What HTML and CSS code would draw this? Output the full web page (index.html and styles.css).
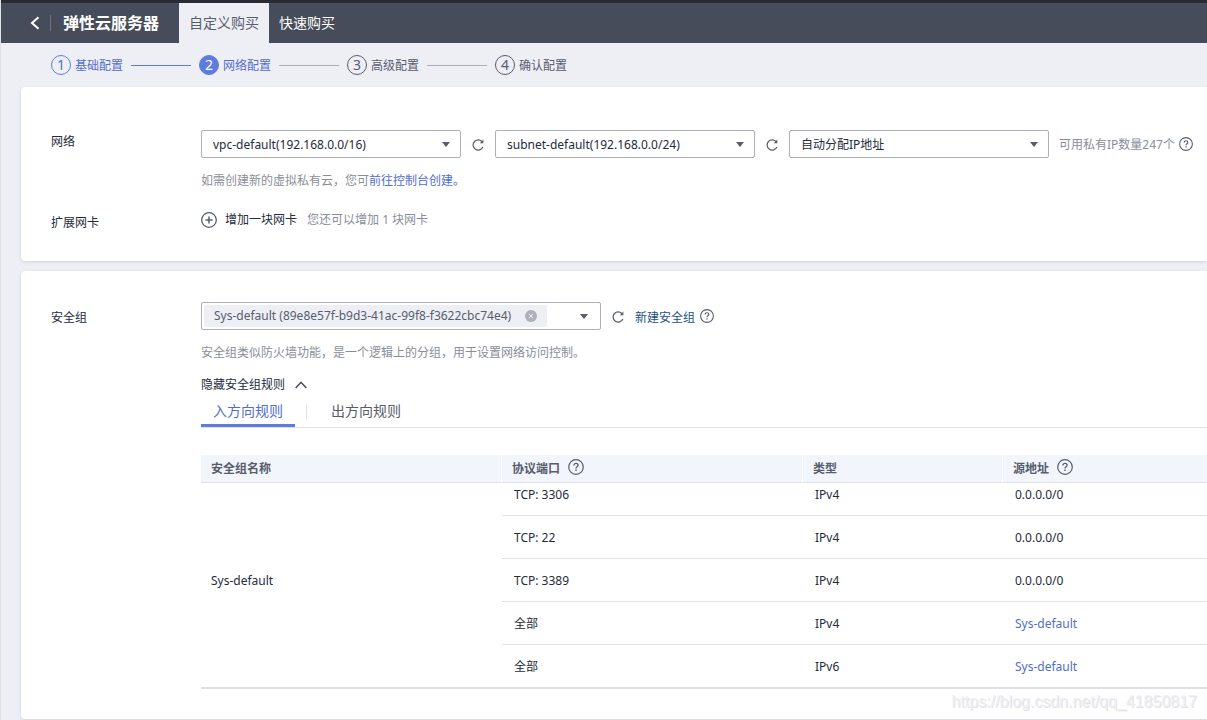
FILE: index.html
```html
<!DOCTYPE html>
<html lang="zh-CN">
<head>
<meta charset="utf-8">
<title>弹性云服务器 - 自定义购买</title>
<link rel="stylesheet" href="styles.css">
</head>
<body>
<svg class="sprite" aria-hidden="true">
  <symbol id="refresh" viewBox="0 0 12 12"><path d="M10.3 2.9A5.1 5.1 0 1 0 10.9 8" fill="none" stroke="currentColor" stroke-width="1.2"/><path d="M11.4.6v3.6H7.8z" fill="currentColor"/></symbol>
  <symbol id="help" viewBox="0 0 16 16"><circle cx="8" cy="8" r="7.3" fill="none" stroke="currentColor" stroke-width="1.2"/><path d="M5.9 6.4c0-1.3.9-2.1 2.1-2.1s2.1.8 2.1 1.9c0 1.5-2.1 1.6-2.1 3.2" fill="none" stroke="currentColor" stroke-width="1.3"/><path d="M7.3 10.6h1.4V12H7.3z" fill="currentColor"/></symbol>
</svg>
<header class="topbar">
  <button class="back" aria-label="返回"><svg width="10" height="14" viewBox="0 0 10 14"><path d="M8.5 1.2 2 7l6.500 5.800" fill="none" stroke="currentColor" stroke-width="2"/></svg></button>
  <h1 class="title">弹性云服务器</h1>
  <nav class="modes">
    <a class="mode mode-active" href="#custom">自定义购买</a>
    <a class="mode" href="#quick">快速购买</a>
  </nav>
</header>
<main class="page">
  <ol class="steps">
    <li class="step done"><span class="num">1</span><span class="step-name">基础配置</span></li>
    <li class="step current"><span class="num">2</span><span class="step-name">网络配置</span></li>
    <li class="step"><span class="num">3</span><span class="step-name">高级配置</span></li>
    <li class="step"><span class="num">4</span><span class="step-name">确认配置</span></li>
  </ol>

  <section class="card network">
    <div class="field">
      <label class="label" for="vpc">网络</label>
      <div class="content">
        <div class="controls">
          <select id="vpc" class="select"><option>vpc-default(192.168.0.0/16)</option></select>
          <button class="icon-btn" aria-label="刷新虚拟私有云"><svg class="i12"><use href="#refresh"/></svg></button>
          <select class="select" aria-label="子网"><option>subnet-default(192.168.0.0/24)</option></select>
          <button class="icon-btn" aria-label="刷新子网"><svg class="i12"><use href="#refresh"/></svg></button>
          <select class="select" aria-label="IP地址分配"><option>自动分配IP地址</option></select>
          <span class="available">可用私有IP数量247个</span>
          <svg class="i14"><use href="#help"/></svg>
        </div>
        <p class="hint">如需创建新的虚拟私有云，您可<a class="link" href="#console">前往控制台创建。</a></p>
      </div>
    </div>
    <div class="field nic">
      <span class="label">扩展网卡</span>
      <div class="content nic-line">
        <button class="add"><svg width="16" height="16" viewBox="0 0 16 16"><circle cx="8" cy="8" r="7.300" fill="none" stroke="#575d6c" stroke-width="1.300"/><path d="M8 4.500v7M4.500 8h7" stroke="#575d6c" stroke-width="1.500"/></svg>增加一块网卡</button>
        <span class="muted">您还可以增加 1 块网卡</span>
      </div>
    </div>
  </section>

  <section class="card security">
    <div class="field">
      <span class="label">安全组</span>
      <div class="content">
        <div class="controls">
          <div class="combo">
            <span class="chip">Sys-default (89e8e57f-b9d3-41ac-99f8-f3622cbc74e4)
              <button class="remove" aria-label="移除"><svg width="12" height="12" viewBox="0 0 12 12"><circle cx="6" cy="6" r="6" fill="#adb0b8"/><path d="m3.800 3.800 4.400 4.400m0-4.400L3.800 8.200" stroke="#eeeff5" stroke-width="1"/></svg></button>
            </span>
            <button class="open" aria-label="展开"><svg width="8" height="5" viewBox="0 0 8 5"><path d="M0 0h8L4 5z" fill="#575d6c"/></svg></button>
          </div>
          <button class="icon-btn" aria-label="刷新安全组"><svg class="i12"><use href="#refresh"/></svg></button>
          <a class="new-group" href="#new">新建安全组</a>
          <svg class="i14"><use href="#help"/></svg>
        </div>
        <p class="hint">安全组类似防火墙功能，是一个逻辑上的分组，用于设置网络访问控制。</p>
        <button class="toggle">隐藏安全组规则<svg width="12" height="8" viewBox="0 0 12 8"><path d="M.7 7 6 1.300 11.300 7" fill="none" stroke="#464c59" stroke-width="1.500"/></svg></button>
        <div class="tabs" role="tablist">
          <button class="tab tab-active" role="tab" aria-selected="true">入方向规则</button>
          <button class="tab" role="tab" aria-selected="false">出方向规则</button>
        </div>
        <table class="rules">
          <colgroup><col class="c-name"><col class="c-port"><col class="c-type"><col></colgroup>
          <thead>
            <tr>
              <th>安全组名称</th>
              <th><span class="th">协议端口<svg class="i16"><use href="#help"/></svg></span></th>
              <th>类型</th>
              <th><span class="th">源地址<svg class="i16"><use href="#help"/></svg></span></th>
            </tr>
          </thead>
          <tbody>
            <tr class="partial"><td class="group" rowspan="5">Sys-default</td><td>TCP: 3306</td><td>IPv4</td><td>0.0.0.0/0</td></tr>
            <tr><td>TCP: 22</td><td>IPv4</td><td>0.0.0.0/0</td></tr>
            <tr><td>TCP: 3389</td><td>IPv4</td><td>0.0.0.0/0</td></tr>
            <tr><td>全部</td><td>IPv4</td><td><a class="link" href="#sg">Sys-default</a></td></tr>
            <tr><td>全部</td><td>IPv6</td><td><a class="link" href="#sg">Sys-default</a></td></tr>
          </tbody>
        </table>
      </div>
    </div>
  </section>
</main>
<div class="watermark">https://blog.csdn.net/qq_41850817</div>
</body>
</html>
```
FILE: styles.css
```css
* { box-sizing: border-box; }
body {
  margin: 0;
  min-height: 100vh;
  position: relative;
  border-left: 1px solid #dfe1e6;
  background: #eeeff5;
  color: #252b3a;
  font: 12px/18px "Noto Sans", "Noto Sans CJK SC", sans-serif;
}
button { font: inherit; color: inherit; background: none; border: 0; padding: 0; cursor: pointer; }
a { text-decoration: none; color: inherit; }
svg { display: block; flex: none; }
.sprite { position: absolute; width: 0; height: 0; }
.i12 { width: 12px; height: 12px; }
.i14 { width: 14px; height: 14px; color: #575d6c; }
.i16 { width: 16px; height: 16px; color: #575d6c; }
.link { color: #526ecc; }

.topbar {
  display: flex;
  align-items: center;
  height: 43px;
  border-top: 3px solid #282b33;
  background: #464c59;
  color: #fff;
}
.back { padding: 1px 10px 1px 29px; border-right: 1px solid #6c7280; }
.title { margin: 0; padding: 0 20px 0 12px; font-size: 16px; line-height: 24px; font-weight: 700; }
.modes { display: flex; align-self: stretch; font-size: 14px; line-height: 40px; }
.mode { padding: 0 10px; }
.mode-active { background: #eeeff5; color: #575d6c; }

.page { padding-left: 20px; }
.steps { display: flex; list-style: none; margin: 0; padding: 12px 30px; color: #575d6c; }
.step { display: flex; align-items: center; gap: 4px; }
.step:not(:last-child)::after { content: ""; width: 60px; height: 1px; margin: 0 8px 0 4px; background: #adb0b8; }
.step-name { padding-top: 2px; }
.num {
  display: flex;
  align-items: center;
  justify-content: center;
  width: 20px;
  height: 20px;
  border: 1px solid #575d6c;
  border-radius: 50%;
  font-size: 14px;
}
.done, .current { color: #526ecc; }
.step.done:not(:last-child)::after { background: #5e7ce0; }
.done .num { border-color: #5e7ce0; }
.current .num { border-color: #5e7ce0; background: #5e7ce0; color: #fff; }

.card {
  padding-left: 30px;
  border-radius: 4px 0 0 4px;
  background: #fff;
  box-shadow: 0 1px 3px rgba(70, 76, 89, .18);
}
.network { padding-top: 43px; padding-bottom: 29px; }
.security { margin-top: 10px; padding-top: 31px; padding-bottom: 30px; }
.field { display: flex; }
.label { flex: none; width: 150px; padding-top: 3px; }
.nic .label { padding-top: 6px; }
.security .label { padding-top: 7px; }
.content { flex: 1; min-width: 0; }
.controls { display: flex; align-items: center; white-space: nowrap; }
.select {
  appearance: none;
  flex: none;
  width: 260px;
  height: 28px;
  padding: 2px 24px 0 11px;
  border: 1px solid #adb0b8;
  border-radius: 2px;
  background: #fff url("data:image/svg+xml,%3Csvg xmlns='http://www.w3.org/2000/svg' width='8' height='5'%3E%3Cpath d='M0 0h8L4 5z' fill='%23575d6c'/%3E%3C/svg%3E") no-repeat right 10px center;
  color: inherit;
  font: inherit;
}
.icon-btn { margin: 2px 11px 0; color: #575d6c; }
.available { padding: 2px 4px 0 10px; color: #8a8e99; }
.hint { margin: 14px 0 0; color: #8a8e99; }
.nic { margin-top: 18px; }
.nic-line { display: flex; align-items: center; gap: 10px; }
.add { display: flex; align-items: center; gap: 8px; }
.muted { color: #8a8e99; }

.combo {
  display: flex;
  justify-content: space-between;
  flex: none;
  width: 400px;
  height: 28px;
  padding: 2px;
  border: 1px solid #adb0b8;
  border-radius: 2px;
}
.chip { display: flex; align-items: center; gap: 14px; padding: 0 10px; border-radius: 2px; background: #eeeff5; color: #575d6c; }
.open { padding: 0 10px; }
.new-group { padding: 4px 5px 0 0; color: #23507f; }
.toggle { display: flex; align-items: center; gap: 10px; margin-top: 14px; }
.tabs { display: flex; margin-top: 1px; border-bottom: 1px solid #dfe1e6; font-size: 14px; line-height: 20px; }
.tab { position: relative; padding: 6px 12px 3px; border-bottom: 3px solid transparent; color: #575d6c; }
.tab + .tab { margin-left: 24px; }
.tab + .tab::before { content: ""; position: absolute; left: -13px; top: 10px; width: 1px; height: 14px; background: #dfe1e6; }
.tab-active { border-color: #5e7ce0; color: #526ecc; }

.rules { width: 100%; margin-top: 27px; table-layout: fixed; border-collapse: separate; border-spacing: 0; }
.c-name, .c-port { width: 301px; }
.c-type { width: 200px; }
th {
  height: 28px;
  padding: 0 10px;
  border-bottom: 1px solid #dfe1e6;
  border-right: 1px solid #fff;
  background: #f2f5fc;
  color: #575d6c;
  text-align: left;
  font-weight: 700;
}
th:last-child { border-right: 0; }
.th { display: flex; align-items: center; gap: 8px; }
.th .i16 { margin-bottom: 4px; }
td { height: 43px; padding: 2px 12px 0; border-bottom: 1px solid #dfe1e6; }
.partial td { height: 33px; padding-bottom: 10px; }
.partial .group { padding-left: 10px; }
tr:last-child td { height: 44px; }
tr:last-child td, .partial .group { border-bottom-width: 2px; }
.watermark {
  position: absolute;
  right: 10px;
  bottom: 9px;
  color: #efeff1;
  font: 16px/18px "Liberation Sans", sans-serif;
  text-shadow: 1px 1px 0 #e2e2e5;
}
```
